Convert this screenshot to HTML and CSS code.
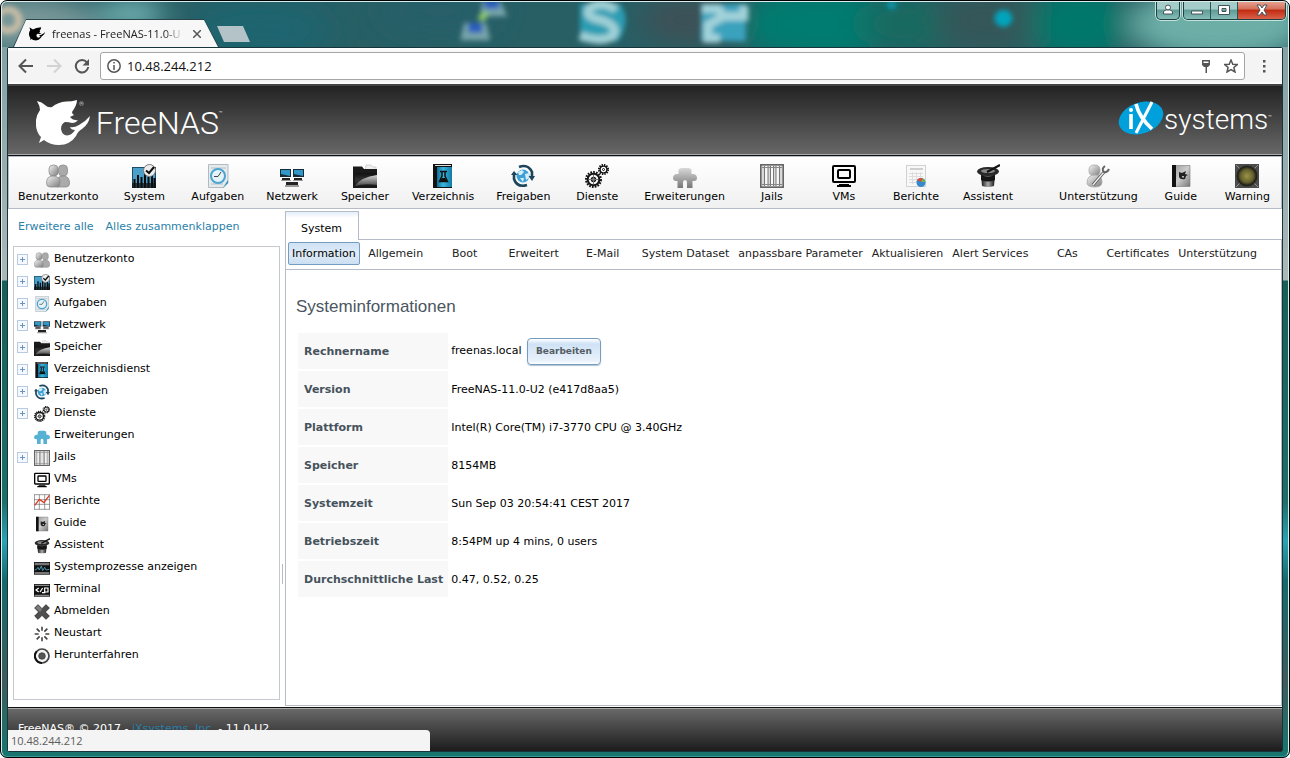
FILE: index.html
```html
<!DOCTYPE html>
<html lang="de">
<head>
<meta charset="utf-8">
<title>freenas - FreeNAS-11.0-U2</title>
<link rel="stylesheet" href="styles.css">
</head>
<body>
<svg class="defs" width="0" height="0" aria-hidden="true">
  <defs>
    <linearGradient id="gSilver" x1="0" y1="0" x2="1" y2="1"><stop offset="0" stop-color="#f4f4f4"/><stop offset="1" stop-color="#7c7c7c"/></linearGradient>
    <linearGradient id="gPuzzle" x1="0" y1="0" x2="0" y2="1"><stop offset="0" stop-color="#d8d8d8"/><stop offset="1" stop-color="#777"/></linearGradient>
    <linearGradient id="gBlue" x1="0" y1="0" x2="1" y2="0"><stop offset="0" stop-color="#0e6f94"/><stop offset=".4" stop-color="#3db4dd"/><stop offset="1" stop-color="#117aa3"/></linearGradient>
    <linearGradient id="gFolder" x1="0" y1="0" x2="0" y2="1"><stop offset="0" stop-color="#111"/><stop offset=".5" stop-color="#333"/><stop offset="1" stop-color="#161616"/></linearGradient>
    <linearGradient id="gShine" x1="0" y1="0" x2="0" y2="1"><stop offset="0" stop-color="#d5d5d5"/><stop offset="1" stop-color="#444"/></linearGradient>
    <linearGradient id="gHat" x1="0" y1="0" x2="1" y2="0"><stop offset="0" stop-color="#111"/><stop offset=".5" stop-color="#aaa"/><stop offset="1" stop-color="#111"/></linearGradient>
    <linearGradient id="gBook" x1="0" y1="0" x2="1" y2="1"><stop offset="0" stop-color="#999"/><stop offset=".5" stop-color="#ccc"/><stop offset="1" stop-color="#777"/></linearGradient>
    <radialGradient id="gLamp"><stop offset="0" stop-color="#9a9545"/><stop offset=".7" stop-color="#66612f"/><stop offset="1" stop-color="#2b2a1c"/></radialGradient>
    <filter id="soft" x="-20%" y="-20%" width="140%" height="140%"><feGaussianBlur stdDeviation="2.500"/></filter>
    <filter id="haze" x="-50%" y="-50%" width="200%" height="200%"><feGaussianBlur stdDeviation="14"/></filter>
  </defs>
  <symbol id="shark" viewBox="0 0 54 46"><path fill="currentColor" d="M1 1Q6 2 9 5 12 8 16 7 22 2 30 1.500 36 1.500 41 0 41 5 36 12 36 14 38 15L34 17Q36 20 42 20.500 39 23 36 23 33 22 29 22 25 24 25 29 26 35 31 35.500 36 35 39 30 35 30 34 27 38 28 43 25 49 22 54 16 53 24 46 29 42 31 40 36 34 45 23 45 14 45 8 40L3 43Q4 40 5 37-1 31 0 20 1 14 4 10 4 6 1 1Z"/></symbol>
  <symbol id="i-users" viewBox="0 0 24 24"><g fill="url(#gSilver)" stroke="#858585" stroke-width=".7"><rect x="12.500" y="1" width="9" height="11" rx="4" fill="#aaa"/><path d="M11 23V16Q12 12 17 12 24 12 23.500 20 23 23 20 23Z" fill="#aaa"/><rect x="3" y="1" width="9" height="11" rx="4"/><path d="M.5 19Q.5 12 7 12 14 12 14 19 14 23 11 23H4Q.5 23 .5 19Z"/></g></symbol>
  <symbol id="i-system" viewBox="0 0 24 24"><path fill="#1c4c68" d="M0 3H24V24H0Z"/><path fill="#4aa0c8" d="M1 4H23V24H1Z"/><path stroke="#0a0a0a" stroke-width="2" d="M2.500 24V15M6 24V11M9.500 24V13M13 24V10M16.500 24V13M20 24V11M22.500 24V14"/><path fill="#111" d="M0 19H24V24H0Z" opacity=".7"/><circle cx="17.500" cy="6.500" r="6" fill="#eee" stroke="#777"/><path fill="none" stroke="#111" stroke-width="2" d="M14 6.500 17 9 22 3"/></symbol>
  <symbol id="i-tasks" viewBox="0 0 24 24"><path fill="#e5eaed" stroke="#b0bbc1" d="M2.500.5H22V19L18 23.500H2.500Z"/><path stroke="#b9c2c7" d="M5 4H20M5 20H17"/><circle cx="12" cy="12" r="7" fill="#e4f2fa" stroke="#4ea4d0" stroke-width="2"/><path fill="none" stroke="#444" stroke-width="1" d="M15 8 12 12.500H8"/><path fill="#2e8fbf" d="M22 16V19L17 23.500Z"/></symbol>
  <symbol id="i-network" viewBox="0 0 24 24"><rect y="5" width="11" height="8" fill="#162c38"/><rect x="13" y="5" width="11" height="8" fill="#162c38"/><path fill="#3197c9" d="M1 6H10V12L1 10ZM14 6H23V12L14 10Z"/><path fill="#222" d="M2 14H10V16H2ZM14 14H22V16H14ZM6 18H18V21H6Z"/><path fill="#999" d="M5 21H19V23H5ZM1 16H11V17H1ZM13 16H23V17H13Z"/></symbol>
  <symbol id="i-folder" viewBox="0 0 24 24"><path fill="#eee" stroke="#bbb" stroke-width=".6" d="M13 1H18L20 3H23V9H12Z"/><path fill="#1a1a1a" d="M0 2.500H9L11 5H24V24H0Z"/><path fill="url(#gFolder)" d="M2 9H24V23H2Z"/><path fill="url(#gShine)" d="M2 22Q8 13 24 11V21Q12 19 2 22Z"/></symbol>
  <symbol id="i-directory" viewBox="0 0 24 24"><path fill="#111" d="M2 0H21V24H2Z"/><path fill="#ddd" d="M4 1H20V2H4Z"/><path fill="url(#gBlue)" d="M6 3H21V23H6Z"/><path fill="none" stroke="#111" stroke-width="1.500" d="M9 7.500H16M11 8V12L8.500 17.500H16.500L14 12V8"/><path fill="#111" d="M11 14H14L16.500 18H8.500Z"/></symbol>
  <symbol id="i-share" viewBox="0 0 24 24"><circle cx="12" cy="12" r="6.500" fill="#3ea0d4"/><path fill="#d8effb" d="M7 8 11 6 13 8 10 11 8 11ZM14 10 18 9 18 14 15 16ZM9 14 13 14 12 18Z"/><g fill="none" stroke="#1d465c" stroke-width="2.600"><path d="M8 3Q17-.5 21 8V14M16 21Q6 24 3 15V9"/></g><path fill="#1d465c" d="M17.500 12H24L21 17ZM0 11H6.500L3 7Z"/></symbol>
  <symbol id="i-services" viewBox="0 0 24 24"><g fill="none" stroke="#151515"><circle cx="8.500" cy="15.500" r="7.300" stroke-width="2.400" stroke-dasharray="1.700 1.120"/><circle cx="8.500" cy="15.500" r="5.800" stroke-width="2"/><circle cx="8.500" cy="15.500" r="2" stroke-width="1.500"/><circle cx="18.500" cy="5.500" r="4.600" stroke-width="2" stroke-dasharray="1.400 1"/><circle cx="18.500" cy="5.500" r="3.400" stroke-width="1.400"/><circle cx="18.500" cy="5.500" r="1" stroke-width="1"/></g><path stroke="#777" d="M8.500 11V20M4 15.500H13"/></symbol>
  <symbol id="i-plugins" viewBox="0 0 24 24"><path d="M5.500 10V7Q5.500 4 9 4H15Q18.500 4 18.500 7V10H21Q24 11 24 14 24 17 21 17H19.500V24H14V18.500Q14 16 12 16 10 16 10 18.500V24H4.500V17H3Q0 17 0 14 0 11 3 10Z"/></symbol>
  <symbol id="i-jails" viewBox="0 0 24 24"><rect x=".8" y=".8" width="22.400" height="22.400" fill="#d9d9d9" stroke="#666" stroke-width="1.600"/><path stroke="#777" stroke-width="1" d="M4.500 2V22M8 2V22M10.500 2V22M13.500 2V22M16 2V22M19.500 2V22"/><path stroke="#fafafa" stroke-width="2" d="M6.200 2V22M12 2V22M17.800 2V22"/><path stroke="#888" d="M2 3.500H22M2 20.500H22"/></symbol>
  <symbol id="i-vms" viewBox="0 0 24 24"><g fill="none" stroke="#000" stroke-width="2" stroke-linejoin="round"><rect x="1" y="2" width="22" height="16" rx="1"/><rect x="6" y="6" width="12" height="8" rx="1"/></g><path fill="#000" d="M7 20H17V21H19V23H5V21H7Z"/></symbol>
  <symbol id="i-reports" viewBox="0 0 24 24"><rect x="2.500" y="1.500" width="19" height="21" fill="#f8f8f8" stroke="#d2d2d2"/><path fill="#cfcfcf" d="M6 4H19V6H6Z"/><path stroke="#ddd" d="M5 9.500H19M5 12.500H19M5 15.500H13M5 18.500H12M8.500 8V20M12.500 8V18M16.500 8V14"/><circle cx="17" cy="18.500" r="4.500" fill="#3489cf"/><path fill="#df4b35" d="M17 18 13 16Q15 13 19 14.500Z"/><path fill="#6db454" d="M17 18 19 14.500Q21.500 16 21.500 18Z"/></symbol>
  <symbol id="i-chart" viewBox="0 0 24 24"><path fill="#fff" stroke="#6d6d6d" d="M.7 1V23M8 1V23M16 1V23M23.300 1V23M0 1H24M0 8.500H24M0 15.500H24M0 23H24"/><path fill="none" stroke="#dd3b24" stroke-width="2" d="M1 17 8 8 15 13 23 2"/></symbol>
  <symbol id="i-wizard" viewBox="0 0 24 24"><path fill="url(#gHat)" d="M5 11H19L18 22Q12 24 6 22Z"/><ellipse cx="12" cy="7.500" rx="11" ry="4.500" fill="#2a2a2a"/><ellipse cx="12" cy="7" rx="7" ry="2" fill="#888"/><path fill="#161616" d="M5 11Q12 14 19 11V16Q12 19 5 16Z"/><path stroke="#111" stroke-width="2" d="M11 8 24 1"/></symbol>
  <symbol id="i-support" viewBox="0 0 24 24"><g fill="url(#gSilver)" stroke="#aaa" stroke-width=".8"><rect x="3" y="1" width="11" height="11" rx="4.500"/><path d="M1 19Q1 11 9 11 16 11 16 18 16 23 9 23 1 23 1 19Z"/></g><path fill="none" stroke="#555" stroke-width="3" d="M7 21 18 8"/><path fill="none" stroke="#eee" stroke-width="1.400" d="M7 21 18 8"/><path fill="none" stroke="#666" stroke-width="2" d="M19 2Q15 5 18 8 21 9 23 5"/></symbol>
  <symbol id="i-guide" viewBox="0 0 24 24"><path fill="url(#gBook)" stroke="#777" stroke-width=".6" d="M4 1.500H21V22.500H4Z"/><path fill="#111" d="M3 1H7V23H3Z"/><path fill="#222" d="M10 8 13 9 17 7 16 10 19 11 17 12 16 15Q11 16 10 13Z"/><path fill="#bbb" d="M13 12H15V13.500H13Z"/></symbol>
  <symbol id="i-warning" viewBox="0 0 24 24"><rect width="24" height="24" fill="#4b4b4b"/><path fill="none" stroke="#929292" d="M1 1 23 23M23 1 1 23"/><circle cx="12" cy="12" r="10.500" fill="#24241e"/><circle cx="12" cy="12" r="9" fill="url(#gLamp)"/></symbol>
  <symbol id="i-processes" viewBox="0 0 24 24"><rect y="3" width="24" height="19" fill="#111"/><path fill="#777" d="M1 4H23V8H1ZM1 18H23V21H1Z"/><path fill="none" stroke="#50a7c6" stroke-width="1.300" d="M1 15 4 14 6 11 8 15 11 9 13 16 16 11 18 15 23 14"/></symbol>
  <symbol id="i-terminal" viewBox="0 0 24 24"><rect y="3" width="24" height="19" fill="#111"/><path fill="#888" d="M1 4H23V6H1ZM1 19H23V21H1Z"/><path fill="none" stroke="#fff" stroke-width="1.800" d="M7 9 3 12 7 15M9 15 13 9M12 16H17M16 9H21V15H16Z"/></symbol>
  <symbol id="i-logout" viewBox="0 0 24 24"><path fill="#4f4f4f" stroke="#222" stroke-width="1.200" d="M6 1 12 7 18 1 23 6 17 12 23 18 18 23 12 17 6 23 1 18 7 12 1 6Z"/><path fill="#aaa" opacity=".5" d="M6 2 12 8 9 12 2 6Z"/></symbol>
  <symbol id="i-restart" viewBox="0 0 24 24"><path stroke="#444" stroke-width="2.400" d="M12 1V7M12 17V23M1 12H7M17 12H23M4 4 8.500 8.500M15.500 15.500 20 20M20 4 15.500 8.500M8.500 15.500 4 20"/></symbol>
  <symbol id="i-shutdown" viewBox="0 0 24 24"><circle cx="12" cy="12" r="10.500" fill="#f4f4f4" stroke="#444" stroke-width="2.600"/><path fill="none" stroke="#111" stroke-width="3" d="M4 5A10.500 10.500 0 0 0 12 22.500"/><circle cx="12" cy="12" r="5" fill="#555" stroke="#333"/></symbol>
</svg>

<div class="window">
  <svg class="wallpaper" viewBox="0 0 1290 48" preserveAspectRatio="none" aria-hidden="true">
    <rect width="1290" height="48" fill="#275f65"/>
    <g filter="url(#haze)">
      <ellipse cx="20" cy="24" rx="80" ry="30" fill="#79989a"/><ellipse cx="130" cy="14" rx="34" ry="14" fill="#7ec0c0"/>
      <ellipse cx="260" cy="30" rx="70" ry="30" fill="#1c6570"/><ellipse cx="440" cy="10" rx="60" ry="24" fill="#275f69"/>
      <ellipse cx="690" cy="20" rx="50" ry="26" fill="#3c5156"/><ellipse cx="820" cy="24" rx="80" ry="40" fill="#007b70"/>
      <ellipse cx="910" cy="24" rx="50" ry="26" fill="#146a60"/><ellipse cx="990" cy="20" rx="54" ry="34" fill="#355758"/><ellipse cx="1080" cy="24" rx="50" ry="40" fill="#00776b"/>
      <ellipse cx="1220" cy="24" rx="90" ry="40" fill="#6dafa7"/>
    </g>
    <g filter="url(#soft)">
      <circle cx="7" cy="20" r="11" fill="none" stroke="#c9bda7" stroke-width="7"/>
      <path fill="#78a5ab" d="M464 23H486L490 41H460ZM482 0H500L507 16H480Z"/><path fill="#2c5fbd" d="M468 23H482V33H468ZM484 0H499V8H484Z"/><path stroke="#8fc76c" stroke-width="7" d="M480 20 486 12"/>
      <path fill="#2a9db3" d="M580 3H620Q632 20 618 42H580Z"/><path fill="none" stroke="#9fd0d6" stroke-width="9" d="M616 9Q602-1 590 7 583 17 602 20 620 27 612 37 600 44 580 36"/>
      <path fill="#3aa2bd" d="M701 3H746V42H701Z"/><path fill="none" stroke="#a1d2d9" stroke-width="9" d="M702 8H718L724 16H744V5M724 16 708 25V39H720"/>
      <circle cx="1004" cy="18" r="9" fill="#00a5bd"/><circle cx="892" cy="4" r="5" fill="#0e92a5"/>
    </g>
  </svg>

  <header class="titlebar">
    <div class="tab-shape">
      <div class="browser-tab">
        <svg class="favicon"><use href="#shark"/></svg>
        <span class="tab-title">freenas - FreeNAS-11.0-U</span>
        <button class="tab-close" aria-label="Tab schließen"><svg viewBox="0 0 8 8"><path d="M0 0 8 8M8 0 0 8"/></svg></button>
      </div>
    </div>
    <button class="new-tab" aria-label="Neuer Tab"></button>
    <div class="window-buttons">
      <button class="profile" aria-label="Profil"><svg viewBox="0 0 12 12"><circle cx="6" cy="3.500" r="2.500"/><path d="M1.500 10V8Q2 6 4.500 6H7.500Q10 6 10.500 8V10Z"/></svg></button>
      <div class="caption-group">
        <button aria-label="Minimieren"><svg viewBox="0 0 12 12"><path d="M.5 7H11.500V10H.5Z"/></svg></button>
        <button aria-label="Maximieren"><svg viewBox="0 0 12 12"><path fill-rule="evenodd" d="M.5 1.500H11.500V10.500H.5ZM4 4.500V7.500H8V4.500Z"/></svg></button>
        <button class="close" aria-label="Schließen"><svg viewBox="0 0 12 12"><path d="M1 1H4L6 4 8 1H11L8 6 11 11H8L6 8 4 11H1L4 6Z"/></svg></button>
      </div>
    </div>
  </header>

  <div class="frame">
    <div class="nav">
      <button aria-label="Zurück"><svg viewBox="0 0 16 16"><path d="M15 8H2M8 1.500 1.500 8 8 14.500"/></svg></button>
      <button class="disabled" aria-label="Vorwärts" disabled><svg viewBox="0 0 16 16"><path d="M1 8H14M8 1.500 14.500 8 8 14.500"/></svg></button>
      <button aria-label="Neu laden"><svg viewBox="0 0 16 16"><path d="M13 4.500A6.200 6.200 0 1 0 14.200 9"/><path class="solid" d="M15 1V7.500H8.500Z"/></svg></button>
      <div class="omnibox">
        <svg class="info" viewBox="0 0 14 14"><circle cx="7" cy="7" r="6.200"/><path d="M7 6V11M7 3V4.600"/></svg>
        <input aria-label="Adresse" value="10.48.244.212">
        <button aria-label="Passwörter"><svg viewBox="0 0 14 14"><path class="solid" fill-rule="evenodd" d="M3 1H11V6L9 8H8V14H6.500V8H5L3 6ZM4.500 2.500V4H9.500V2.500Z"/></svg></button>
        <button aria-label="Lesezeichen"><svg viewBox="0 0 14 14"><path d="M7 1 8.800 5.200 13.300 5.500 9.900 8.500 11 13 7 10.600 3 13 4.100 8.500.7 5.500 5.200 5.200Z"/></svg></button>
      </div>
      <button class="menu" aria-label="Menü"><svg viewBox="0 0 14 14"><path class="solid" d="M6 1H8.500V3.500H6ZM6 6H8.500V8.500H6ZM6 11H8.500V13.500H6Z"/></svg></button>
    </div>

    <div class="page">
      <div class="brand">
        <div class="freenas"><svg class="shark-logo"><use href="#shark"/></svg><sup class="reg">®</sup><span class="freenas-name">FreeNAS</span><sup class="tm">™</sup></div>
        <div class="ix"><svg class="ix-logo" viewBox="0 0 46 36"><ellipse cx="23" cy="18" rx="23" ry="15.500" transform="rotate(-20 23 18)" fill="#00a0dc"/><path fill="none" stroke="#fff" stroke-width="3.600" d="M13 14V29M18 4Q21 17 34 29"/><path stroke="#fff" stroke-width="3" d="M34 2 18 33"/><circle cx="13" cy="10" r="2" fill="#fff"/></svg><span class="ix-name">systems</span><sup class="tm">™</sup></div>
      </div>

      <nav class="toolbar" aria-label="Hauptmenü">
        <button><svg><use href="#i-users"/></svg>Benutzerkonto</button>
        <button><svg><use href="#i-system"/></svg>System</button>
        <button><svg><use href="#i-tasks"/></svg>Aufgaben</button>
        <button><svg><use href="#i-network"/></svg>Netzwerk</button>
        <button><svg><use href="#i-folder"/></svg>Speicher</button>
        <button><svg><use href="#i-directory"/></svg>Verzeichnis</button>
        <button><svg><use href="#i-share"/></svg>Freigaben</button>
        <button><svg><use href="#i-services"/></svg>Dienste</button>
        <button><svg fill="url(#gPuzzle)"><use href="#i-plugins"/></svg>Erweiterungen</button>
        <button><svg><use href="#i-jails"/></svg>Jails</button>
        <button><svg><use href="#i-vms"/></svg>VMs</button>
        <button><svg><use href="#i-reports"/></svg>Berichte</button>
        <button><svg><use href="#i-wizard"/></svg>Assistent</button>
        <div class="toolbar-end">
          <button><svg><use href="#i-support"/></svg>Unterstützung</button>
          <button><svg><use href="#i-guide"/></svg>Guide</button>
          <button><svg><use href="#i-warning"/></svg>Warning</button>
        </div>
      </nav>

      <div class="columns">
        <aside class="sidebar">
          <div class="tree-links"><a href="#expand">Erweitere alle</a><a href="#collapse">Alles zusammenklappen</a></div>
          <ul class="tree">
            <li><button class="expander" aria-label="Benutzerkonto aufklappen"></button><svg><use href="#i-users"/></svg>Benutzerkonto</li>
            <li><button class="expander" aria-label="System aufklappen"></button><svg><use href="#i-system"/></svg>System</li>
            <li><button class="expander" aria-label="Aufgaben aufklappen"></button><svg><use href="#i-tasks"/></svg>Aufgaben</li>
            <li><button class="expander" aria-label="Netzwerk aufklappen"></button><svg><use href="#i-network"/></svg>Netzwerk</li>
            <li><button class="expander" aria-label="Speicher aufklappen"></button><svg><use href="#i-folder"/></svg>Speicher</li>
            <li><button class="expander" aria-label="Verzeichnisdienst aufklappen"></button><svg><use href="#i-directory"/></svg>Verzeichnisdienst</li>
            <li><button class="expander" aria-label="Freigaben aufklappen"></button><svg><use href="#i-share"/></svg>Freigaben</li>
            <li><button class="expander" aria-label="Dienste aufklappen"></button><svg><use href="#i-services"/></svg>Dienste</li>
            <li class="leaf"><svg fill="#56b1d2"><use href="#i-plugins"/></svg>Erweiterungen</li>
            <li><button class="expander" aria-label="Jails aufklappen"></button><svg><use href="#i-jails"/></svg>Jails</li>
            <li class="leaf"><svg><use href="#i-vms"/></svg>VMs</li>
            <li class="leaf"><svg><use href="#i-chart"/></svg>Berichte</li>
            <li class="leaf"><svg><use href="#i-guide"/></svg>Guide</li>
            <li class="leaf"><svg><use href="#i-wizard"/></svg>Assistent</li>
            <li class="leaf"><svg><use href="#i-processes"/></svg>Systemprozesse anzeigen</li>
            <li class="leaf"><svg><use href="#i-terminal"/></svg>Terminal</li>
            <li class="leaf"><svg><use href="#i-logout"/></svg>Abmelden</li>
            <li class="leaf"><svg><use href="#i-restart"/></svg>Neustart</li>
            <li class="leaf"><svg><use href="#i-shutdown"/></svg>Herunterfahren</li>
          </ul>
        </aside>
        <div class="splitter"></div>
        <main class="pane">
          <div class="pane-tabs" role="tablist"><button role="tab" aria-selected="true">System</button></div>
          <div class="pane-body">
            <div class="subtabs" role="tablist">
              <button role="tab" aria-selected="true">Information</button>
              <button role="tab">Allgemein</button>
              <button role="tab">Boot</button>
              <button role="tab">Erweitert</button>
              <button role="tab">E-Mail</button>
              <button role="tab">System Dataset</button>
              <button role="tab">anpassbare Parameter</button>
              <button role="tab">Aktualisieren</button>
              <button role="tab">Alert Services</button>
              <button role="tab">CAs</button>
              <button role="tab">Certificates</button>
              <button role="tab">Unterstützung</button>
            </div>
            <section class="content">
              <h1>Systeminformationen</h1>
              <table class="info-table">
                <tr><th scope="row">Rechnername</th><td>freenas.local <button class="edit">Bearbeiten</button></td></tr>
                <tr><th scope="row">Version</th><td>FreeNAS-11.0-U2 (e417d8aa5)</td></tr>
                <tr><th scope="row">Plattform</th><td>Intel(R) Core(TM) i7-3770 CPU @ 3.40GHz</td></tr>
                <tr><th scope="row">Speicher</th><td>8154MB</td></tr>
                <tr><th scope="row">Systemzeit</th><td>Sun Sep 03 20:54:41 CEST 2017</td></tr>
                <tr><th scope="row">Betriebszeit</th><td>8:54PM up 4 mins, 0 users</td></tr>
                <tr><th scope="row">Durchschnittliche Last</th><td>0.47, 0.52, 0.25</td></tr>
              </table>
            </section>
          </div>
        </main>
      </div>

      <footer class="footer">FreeNAS® © 2017 - <a href="#ix">iXsystems, Inc.</a> - 11.0-U2</footer>
      <div class="status">10.48.244.212</div>
    </div>
  </div>
</div>
</body>
</html>
```

FILE: styles.css
```css
* { box-sizing: border-box; }
body { margin: 0; background: #fff; font: 11px/14px "DejaVu Sans", Verdana, sans-serif; color: #000; }
button { margin: 0; padding: 0; border: 0; background: none; font: inherit; color: inherit; }
a { color: #2a7fa8; text-decoration: none; }
.defs { position: absolute; }

.window {
  position: relative;
  display: flex;
  flex-direction: column;
  min-height: 100vh;
  padding: 0 6px 5px;
  border: 1px solid #000;
  border-radius: 7px;
  overflow: hidden;
  background: linear-gradient(#7e9d9f 0, #a9b7b7 270px, #a9b7b7 279px, #17605a 280px, #1d6f68 500px, #2ba3b5 540px, #146a6d 580px, #3f5c5b 680px, #16766f 100%);
}
.window::after { content: ""; position: absolute; inset: 0; border: 1px solid #d9eeee; border-bottom-color: #3c9b98; border-radius: 6px; pointer-events: none; }
.wallpaper { position: absolute; left: 0; top: 0; width: 100%; height: 46px; }

/* browser chrome */
.titlebar { position: relative; display: flex; align-items: flex-end; height: 46px; padding-left: 6px; font: 11px/16px "Open Sans", sans-serif; }
.tab-shape { width: 206px; height: 28px; padding: 1px 1px 0; background: #29454a; clip-path: polygon(0 100%, 13px 0, 191px 0, 100% 100%); }
.browser-tab { display: flex; align-items: center; height: 27px; padding: 0 17px 0 15px; background: #f7f7f7; clip-path: polygon(0 100%, 12px 0, 190px 0, 100% 100%); }
.favicon { flex: none; width: 16px; height: 14px; color: #000; }
.tab-title { flex: 1; margin-left: 7px; white-space: nowrap; color: #222; mask-image: linear-gradient(to right, #000 85%, transparent); }
.tab-close { width: 8px; margin-left: 9px; line-height: 0; }
.tab-close svg { width: 8px; height: 8px; stroke: #555; stroke-width: 1.500; }
.new-tab { width: 33px; height: 16px; margin: 0 0 5px -2px; background: #b4c3c7; clip-path: polygon(0 0, 26px 0, 33px 16px, 7px 16px); }
.window-buttons { display: flex; align-self: flex-start; gap: 3px; margin: 0 -3px 0 auto; }
.window-buttons button { display: grid; place-items: center; height: 18px; background: linear-gradient(#a4cdc9 45%, #5f9b96 50%, #86bdb7); }
.window-buttons svg { width: 12px; height: 12px; fill: #fff; stroke: #45545a; stroke-width: 1; }
.profile, .caption-group { border: 1px solid #1d3f40; border-top: 0; border-radius: 0 0 5px 5px; box-shadow: 0 0 0 1px #c5e0dd; overflow: hidden; }
.window-buttons .profile { width: 24px; height: 19px; }
.caption-group { display: flex; height: 19px; }
.caption-group button { width: 27px; border-right: 1px solid #2d5557; }
.caption-group .close { width: 47px; border: 0; background: linear-gradient(#e9a796, #d4705a 45%, #c02a10 50%, #da624a); }

.frame { position: relative; flex: 1; display: flex; flex-direction: column; border: 1px solid #17353a; border-radius: 2px; background: #f6f6f6; }
.nav { display: flex; align-items: center; gap: 12px; height: 36px; padding: 0 13px 0 10px; background: linear-gradient(#fff, #f4f4f4 4px, #f4f4f4 33px, #fff); }
.nav button { display: grid; place-items: center; width: 16px; height: 16px; }
.nav svg { width: 16px; height: 16px; fill: none; stroke: #555; stroke-width: 2; }
.nav .solid { fill: #555; stroke: none; }
.nav .disabled svg { stroke: #d3d3d3; }
.omnibox { flex: 1; display: flex; align-items: center; gap: 6px; height: 28px; margin-left: -2px; padding: 0 5px 0 6px; border: 1px solid #a5a5a5; border-radius: 3px; background: #fff; }
.omnibox svg { width: 14px; height: 14px; stroke-width: 1.500; flex: none; }
.omnibox input { flex: 1; min-width: 0; padding: 0; border: 0; outline: 0; font: 13px/18px "Open Sans", sans-serif; color: #111; background: none; }
.omnibox button + button { margin-left: 3px; }
.nav .menu { margin: 0 -2px 0 0; width: 14px; }
.nav .menu svg { width: 14px; height: 14px; }

/* application */
.page { position: relative; flex: 1; display: flex; flex-direction: column; background: #fff; }
.brand { display: flex; justify-content: space-between; height: 72px; padding: 14px 10px 0 28px; border-top: 2px solid #444; border-bottom: 1px solid #111; background: linear-gradient(#232323, #686868); box-shadow: inset 0 -1px #aaa; color: #fff; font-family: Roboto, sans-serif; font-weight: 300; }
.freenas, .ix { display: flex; align-items: flex-start; }
.shark-logo { width: 54px; height: 46px; }
.freenas-name { margin-left: 12px; font-size: 32px; line-height: 46px; }
.brand sup { font-size: 6px; line-height: 8px; }
.brand .reg { margin-left: -11px; }
.freenas .tm { margin-top: 9px; }
.ix-logo { width: 46px; height: 36px; }
.ix-name { font-size: 28px; line-height: 40px; }
.ix .tm { margin-top: 13px; }

.toolbar { display: flex; height: 53px; border: 1px solid #b5bcc7; background: linear-gradient(#fff, #f0f0f0); }
.toolbar button { display: flex; flex-direction: column; align-items: center; gap: 2px; min-width: 72px; padding: 7px 11px 0; white-space: nowrap; }
.toolbar svg { width: 24px; height: 24px; }
.toolbar button:first-child { padding: 7px 10px 0 9px; }
.toolbar-end { display: flex; margin-left: auto; }
.toolbar-end button { min-width: 66px; }

.columns { flex: 1; display: flex; padding-top: 2px; }
.sidebar { display: flex; flex-direction: column; width: 272px; padding: 0 0 6px 5px; }
.tree-links { display: flex; gap: 12px; padding: 9px 5px 12px; }
.tree { flex: 1; margin: 0; padding: 1px 3px; border: 1px solid #c6c9cd; list-style: none; }
.tree li { display: flex; align-items: center; height: 22px; white-space: nowrap; }
.tree .leaf { padding-left: 17px; }
.tree svg { width: 16px; height: 16px; margin: 2px 4px 0 0; }
.expander { width: 11px; height: 11px; margin-right: 6px; border: 1px solid #b9cbe2; background: linear-gradient(#6b94bd, #6b94bd) center / 5px 1px no-repeat, linear-gradient(#6b94bd, #6b94bd) center / 1px 5px no-repeat, #f5f9fd; }
.splitter { display: flex; align-items: center; width: 5px; padding: 230px 0 0 2px; }
.splitter::before { content: ""; width: 1px; height: 20px; background: #b5bcc7; }

.pane { flex: 1; display: flex; flex-direction: column; min-width: 0; }
.pane-tabs { display: flex; }
.pane-tabs button { position: relative; height: 29px; margin-bottom: -1px; padding: 6px 16px 0 15px; border: 1px solid #b5bcc7; border-bottom: 0; background: linear-gradient(#e4eefa, #fff 6px); z-index: 1; }
.pane-body { flex: 1; border: 1px solid #b5bcc7; }
.subtabs { display: flex; height: 30px; padding: 2px 2px 0; border-bottom: 1px solid #b5bcc7; }
.subtabs button { height: 23px; min-width: 68px; margin-right: 1px; padding: 1px 3px 0; border: 1px solid transparent; border-radius: 2px; color: #222; white-space: nowrap; }
.subtabs button[aria-selected="true"] { margin-right: 2px; border-color: #769dc0; background: linear-gradient(#cfe2f5, #dfebf7 50%, #cbdff2); color: #000; }
.content { padding: 27px 10px; }
h1 { margin: 0; font: 17px/20px "Liberation Sans", Arial, sans-serif; color: #4a5661; }
.info-table { margin: 14px 0 0 2px; border-spacing: 0 2px; border-collapse: separate; }
.info-table th { height: 36px; min-width: 150px; padding: 1px 5px 0 6px; background: #f8f8f8; color: #46525c; text-align: left; white-space: nowrap; }
.info-table td { padding: 1px 3px 0; white-space: nowrap; }
.edit { height: 27px; margin-left: 2px; padding: 0 8px 2px; border: 1px solid #769dc0; border-radius: 4px; background: linear-gradient(#fff, #cfe2f5 5px, #e9f2fb 22px, #fff); box-shadow: 0 1px 1px #b4c2cf; font-size: 9px; font-weight: bold; color: #555c63; }

.footer { height: 44px; margin-top: 1px; padding: 14px 10px 0; border-top: 1px solid #111; background: linear-gradient(#6a6a6a, #1c1c1c); box-shadow: inset 0 1px #aaa; color: #fff; }
.status { position: absolute; left: 0; bottom: 0; width: 422px; height: 21px; padding: 3px 3px 2px; border-radius: 0 4px 0 0; background: #f4f4f4; color: #5d5d5d; font: 11px/16px "Open Sans", sans-serif; }
```
